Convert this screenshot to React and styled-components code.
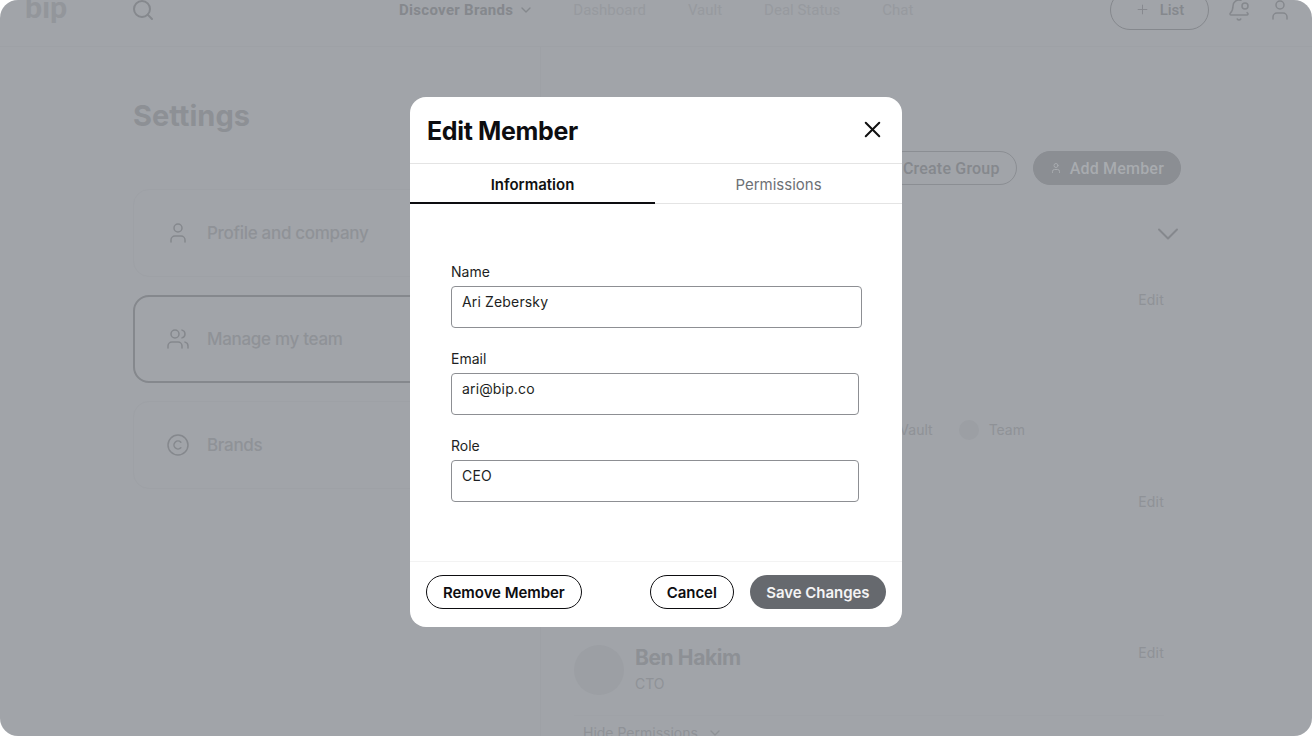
import React from 'react'
import styled, { createGlobalStyle } from 'styled-components'
import { Search, ChevronDown, Plus, BellDot, User, Users, Copyright, X } from 'lucide-react'

const GlobalStyle = createGlobalStyle`
  html, body {
    margin: 0;
    background: #fff;
    font-family: Inter, "Liberation Sans", sans-serif;
  }
  * { box-sizing: border-box; }
`

const Page = styled.div`
  position: relative;
  width: 1312px;
  height: 736px;
  overflow: hidden;
  border-radius: 18px;
  background: #a1a4a9;
  color: #8f9297;
`

const Header = styled.header`
  display: flex;
  align-items: center;
  height: 47px;
  padding: 0 20px 27px 25px;
  border-bottom: 1px solid #9ea1a6;
  font-family: Roboto, sans-serif;
`

const Logo = styled.div`
  width: 108px;
  margin-bottom: 8px;
  font-family: Lato, sans-serif;
  font-size: 30px;
  line-height: 30px;
  font-weight: 900;
  color: #93969b;
`

const SearchIcon = styled(Search)`
  width: 24px;
  height: 24px;
  margin-left: -2px;
  color: #85888d;
`

const Nav = styled.nav`
  display: flex;
  align-items: center;
  gap: 42px;
  margin-left: 244px;
`

const NavItem = styled.span`
  display: flex;
  align-items: center;
  gap: 5px;
  margin-right: ${p => (p.$active ? -3 : 0)}px;
  font-size: 15px;
  line-height: 20px;
  letter-spacing: ${p => (p.$active ? 0.3 : 0)}px;
  font-weight: ${p => (p.$active ? 700 : 400)};
  color: ${p => (p.$active ? '#85888d' : '#979a9f')};
  svg { width: 16px; height: 16px; }
`

const HeaderActions = styled.div`
  display: flex;
  align-items: center;
  gap: 17.5px;
  margin-left: auto;
  color: #85888d;
  svg { width: 24px; height: 24px; stroke-width: 1.5; }
`

const ListButton = styled.div`
  display: flex;
  flex: none;
  align-items: center;
  justify-content: center;
  gap: 10px;
  width: 99px;
  height: 40px;
  border: 1.5px solid #85888d;
  border-radius: 20px;
  font-size: 15px;
  font-weight: 500;
  color: #85888d;
  svg { width: 15px; height: 15px; }
`

const Main = styled.main`
  display: flex;
`

const Sidebar = styled.aside`
  width: 541px;
  height: 689px;
  padding: 51px 40px 0 133px;
  border-right: 1px solid #9ea1a6;
`

const Title = styled.h1`
  margin: 0 0 55px;
  font-size: 29px;
  line-height: 36px;
  font-weight: 700;
  color: #8d9095;
`

const Cards = styled.div`
  display: flex;
  flex-direction: column;
  gap: 18px;
`

const Card = styled.div`
  display: flex;
  align-items: center;
  gap: 17px;
  height: 88px;
  padding-left: ${p => (p.$active ? 31 : 32)}px;
  border: ${p => (p.$active ? '2px solid #85888d' : '1px solid #9ea1a6')};
  border-radius: 16px;
  font-size: 17px;
  letter-spacing: -0.3px;
  font-weight: 500;
  color: #8f9297;
  svg { width: 24px; height: 24px; stroke-width: 1.5; color: #85888d; }
`

const Content = styled.section`
  display: flex;
  flex: 1;
  flex-direction: column;
  padding: 104px 131px 0 33px;
`

const Toolbar = styled.div`
  display: flex;
  justify-content: flex-end;
  gap: 16px;
  font-family: Roboto, sans-serif;
`

const PillButton = styled.div`
  display: flex;
  align-items: center;
  gap: 8px;
  height: 34px;
  padding: 0 16px;
  border: 1.5px solid #8b8e93;
  border-radius: 17px;
  background: ${p => (p.$filled ? '#8b8e93' : 'transparent')};
  font-size: 16px;
  letter-spacing: 0.2px;
  font-weight: 500;
  color: ${p => (p.$filled ? '#a8abaf' : '#85888d')};
  svg { width: 12px; height: 12px; }
`

const GroupRow = styled.div`
  display: flex;
  justify-content: flex-end;
  height: 71px;
  padding-top: 31px;
  margin-right: -5px;
  color: #85888d;
  svg { width: 36px; height: 36px; stroke-width: 1.3; }
`

const MemberRow = styled.div`
  display: flex;
  flex-direction: column;
  flex: none;
  height: ${p => p.$height}px;
  margin-top: ${p => p.$top || 0}px;
  padding-right: 17px;
`

const MemberHead = styled.div`
  display: flex;
  justify-content: space-between;
  align-items: flex-start;
`

const MemberInfo = styled.div`
  display: flex;
  gap: 11px;
`

const Avatar = styled.div`
  flex: none;
  width: 50px;
  height: 50px;
  border-radius: 50%;
  background: #9c9fa4;
`

const MemberName = styled.div`
  font-size: 21px;
  line-height: 26px;
  letter-spacing: -0.4px;
  font-weight: 700;
  color: #8d9095;
`

const MemberRole = styled.div`
  margin-top: 5px;
  font-size: 14px;
  line-height: 16px;
  color: #8f9297;
`

const EditLink = styled.span`
  margin-left: auto;
  font-size: 14px;
  line-height: 16px;
  letter-spacing: 0.2px;
  color: #8f9297;
`

const Permissions = styled.div`
  display: flex;
  justify-content: flex-end;
  gap: 26px;
  margin: 112px 139px 0 0;
`

const Permission = styled.div`
  display: flex;
  align-items: center;
  gap: 10px;
  font-size: 14px;
  line-height: 20px;
  color: #8f9297;
`

const PermissionDot = styled.span`
  width: 20px;
  height: 20px;
  border-radius: 50%;
  background: #9c9fa4;
`

const HidePermissions = styled.div`
  display: flex;
  align-items: center;
  gap: 9px;
  margin-top: 20px;
  padding: 8px 0 0 9px;
  border-top: 1px solid #9fa2a7;
  font-size: 14px;
  line-height: 18px;
  color: #8f9297;
  svg { width: 16px; height: 16px; }
`

const Modal = styled.div`
  position: absolute;
  top: 97px;
  left: 410px;
  display: flex;
  flex-direction: column;
  width: 492px;
  height: 530px;
  border-radius: 16px;
  background: #fff;
  color: #111;
`

const ModalHead = styled.div`
  display: flex;
  align-items: center;
  justify-content: space-between;
  height: 67px;
  padding: 2px 16px 0 17px;
  border-bottom: 1px solid #e4e4e4;
`

const ModalTitle = styled.h2`
  margin: 0;
  font-size: 25px;
  line-height: 32px;
  font-weight: 700;
  letter-spacing: -0.35px;
  color: #0d0d10;
`

const CloseIcon = styled(X)`
  width: 27px;
  height: 27px;
  margin-top: -3px;
  stroke-width: 1.8;
  color: #111;
`

const Tabs = styled.div`
  display: grid;
  grid-template-columns: 245px 1fr;
  height: 40px;
`

const Tab = styled.div`
  display: flex;
  align-items: center;
  justify-content: center;
  padding: 2px 0 ${p => (p.$active ? 0 : 1)}px;
  border-bottom: ${p => (p.$active ? '2px solid #0d0d10' : '1px solid #e4e4e4')};
  font-size: 15px;
  font-weight: ${p => (p.$active ? 600 : 400)};
  color: ${p => (p.$active ? '#111' : '#6d7075')};
`

const ModalBody = styled.div`
  display: flex;
  flex: 1;
  flex-direction: column;
  gap: 22px;
  padding: 59px 0 0 41px;
`

const Field = styled.div`
  display: flex;
  flex-direction: column;
  gap: 5px;
`

const FieldLabel = styled.div`
  font-size: 14px;
  line-height: 18px;
  color: #1d1f23;
`

const FieldInput = styled.div`
  width: ${p => p.$width}px;
  height: 42px;
  padding: 6px 10px;
  border: 1px solid #8d8f93;
  border-radius: 4px;
  font-size: 14px;
  line-height: 18px;
  letter-spacing: 0.15px;
  color: #1d1f23;
`

const ModalFoot = styled.div`
  display: flex;
  align-items: center;
  gap: 16px;
  height: 66px;
  padding: 0 16px 6px;
  border-top: 1px solid #f3f3f3;
`

const FootButton = styled.div`
  display: flex;
  align-items: center;
  height: 34px;
  padding: 1px ${p => (p.$solid ? 16.5 : 16)}px 0;
  margin-left: ${p => (p.$push ? 'auto' : 0)};
  border: ${p => (p.$solid ? 'none' : '1.5px solid #0d0d10')};
  border-radius: 17px;
  background: ${p => (p.$solid ? '#66696e' : '#fff')};
  font-size: 15px;
  letter-spacing: -0.05px;
  font-weight: 600;
  color: ${p => (p.$solid ? '#f4f4f5' : '#0d0d10')};
`

const navLinks = ['Dashboard', 'Vault', 'Deal Status', 'Chat']

const App = () => (
  <Page>
    <GlobalStyle />
    <Header>
      <Logo>bip</Logo>
      <SearchIcon />
      <Nav>
        <NavItem $active>Discover Brands <ChevronDown /></NavItem>
        {navLinks.map(link => <NavItem key={link}>{link}</NavItem>)}
      </Nav>
      <HeaderActions>
        <ListButton><Plus /> List</ListButton>
        <BellDot />
        <User />
      </HeaderActions>
    </Header>
    <Main>
      <Sidebar>
        <Title>Settings</Title>
        <Cards>
          <Card><User /> Profile and company</Card>
          <Card $active><Users /> Manage my team</Card>
          <Card><Copyright /> Brands</Card>
        </Cards>
      </Sidebar>
      <Content>
        <Toolbar>
          <PillButton>Create Group</PillButton>
          <PillButton $filled><User /> Add Member</PillButton>
        </Toolbar>
        <GroupRow><ChevronDown /></GroupRow>
        <MemberRow $height={202} $top={36}>
          <MemberHead><EditLink>Edit</EditLink></MemberHead>
          <Permissions>
            <Permission><PermissionDot /> Vault</Permission>
            <Permission><PermissionDot /> Team</Permission>
          </Permissions>
        </MemberRow>
        <MemberRow $height={151}>
          <MemberHead><EditLink>Edit</EditLink></MemberHead>
        </MemberRow>
        <MemberRow $height={91}>
          <MemberHead>
            <MemberInfo>
              <Avatar />
              <div>
                <MemberName>Ben Hakim</MemberName>
                <MemberRole>CTO</MemberRole>
              </div>
            </MemberInfo>
            <EditLink>Edit</EditLink>
          </MemberHead>
          <HidePermissions>Hide Permissions <ChevronDown /></HidePermissions>
        </MemberRow>
      </Content>
    </Main>
    <Modal>
      <ModalHead>
        <ModalTitle>Edit Member</ModalTitle>
        <CloseIcon />
      </ModalHead>
      <Tabs>
        <Tab $active>Information</Tab>
        <Tab>Permissions</Tab>
      </Tabs>
      <ModalBody>
        <Field>
          <FieldLabel>Name</FieldLabel>
          <FieldInput $width={411}>Ari Zebersky</FieldInput>
        </Field>
        <Field>
          <FieldLabel>Email</FieldLabel>
          <FieldInput $width={408}>ari@bip.co</FieldInput>
        </Field>
        <Field>
          <FieldLabel>Role</FieldLabel>
          <FieldInput $width={408}>CEO</FieldInput>
        </Field>
      </ModalBody>
      <ModalFoot>
        <FootButton>Remove Member</FootButton>
        <FootButton $push>Cancel</FootButton>
        <FootButton $solid>Save Changes</FootButton>
      </ModalFoot>
    </Modal>
  </Page>
)

export default App
